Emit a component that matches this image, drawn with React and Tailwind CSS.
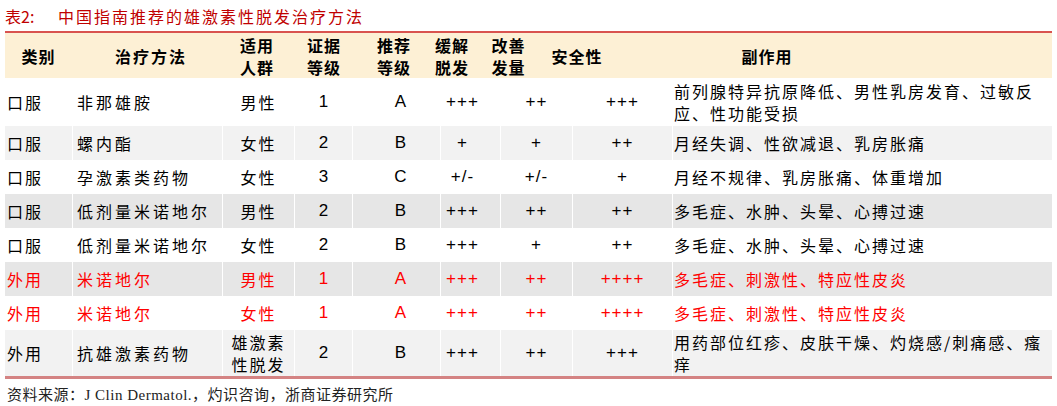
import React from 'react';

const cjk = '"Noto Sans CJK SC", "Liberation Sans", sans-serif';
const num = '"Liberation Sans", Arial, sans-serif';

const rows = [
  { type: '口服', name: '非那雄胺', who: '男性', ev: '1', rec: 'A', a: '+++', b: '++', s: '+++', side: ['前列腺特异抗原降低、男性乳房发育、过敏反', '应、性功能受损'], bg: 'bg-white', h: 'h-[48px]' },
  { type: '口服', name: '螺内酯', who: '女性', ev: '2', rec: 'B', a: '+', b: '+', s: '++', side: ['月经失调、性欲减退、乳房胀痛'], bg: 'bg-[#f2f2f2]', h: 'h-[34px]' },
  { type: '口服', name: '孕激素类药物', who: '女性', ev: '3', rec: 'C', a: '+/-', b: '+/-', s: '+', side: ['月经不规律、乳房胀痛、体重增加'], bg: 'bg-white', h: 'h-[34px]' },
  { type: '口服', name: '低剂量米诺地尔', who: '男性', ev: '2', rec: 'B', a: '+++', b: '++', s: '++', side: ['多毛症、水肿、头晕、心搏过速'], bg: 'bg-[#e6e6e6]', h: 'h-[34px]' },
  { type: '口服', name: '低剂量米诺地尔', who: '女性', ev: '2', rec: 'B', a: '+++', b: '+', s: '++', side: ['多毛症、水肿、头晕、心搏过速'], bg: 'bg-white', h: 'h-[34px]' },
  { type: '外用', name: '米诺地尔', who: '男性', ev: '1', rec: 'A', a: '+++', b: '++', s: '++++', side: ['多毛症、刺激性、特应性皮炎'], bg: 'bg-[#e6e6e6]', h: 'h-[34px]', red: true },
  { type: '外用', name: '米诺地尔', who: '女性', ev: '1', rec: 'A', a: '+++', b: '++', s: '++++', side: ['多毛症、刺激性、特应性皮炎'], bg: 'bg-white', h: 'h-[34px]', red: true },
  { type: '外用', name: '抗雄激素药物', who: ['雄激素', '性脱发'], ev: '2', rec: 'B', a: '+++', b: '++', s: '+++', side: ['用药部位红疹、皮肤干燥、灼烧感/刺痛感、瘙', '痒'], bg: 'bg-[#f2f2f2]', h: 'h-[46px]' },
];

const Lines = ({ v }) =>
  Array.isArray(v) ? v.map((l, i) => <div key={i}>{l}</div>) : v;

const App = () => {
  return (
    <div className="w-[1057px] h-[406px] bg-white relative overflow-hidden">
      {/* Title */}
      <div className="h-[31px] flex items-center pl-[5px] text-[16px] text-[#c00000]" style={{ fontFamily: cjk }}>
        <span className="w-[53px]">表2:</span>
        <span className="tracking-[2px]">中国指南推荐的雄激素性脱发治疗方法</span>
      </div>

      <div className="mx-[5px] w-[1047px]">
        {/* Header */}
        <div
          className="border-t-2 border-[#d9534f] bg-[#fdf0d5] h-[47px] grid grid-cols-[67px_158px_54px_80px_60px_56px_57px_80px_300px_135px] items-center text-center text-[16px] font-bold leading-[22px] text-black"
          style={{ fontFamily: cjk }}
        >
          <div className="tracking-[1px]">类别</div>
          <div className="tracking-[2px]">治疗方法</div>
          <div className="tracking-[1px]">适用<br />人群</div>
          <div className="tracking-[1px]">证据<br />等级</div>
          <div className="tracking-[1px]">推荐<br />等级</div>
          <div className="tracking-[1px]">缓解<br />脱发</div>
          <div className="tracking-[1px]">改善<br />发量</div>
          <div className="tracking-[1px]">安全性</div>
          <div className="tracking-[1px]">副作用</div>
          <div></div>
        </div>

        {/* Body */}
        {rows.map((r, i) => (
          <div
            key={i}
            className={`${r.bg} ${r.h} grid grid-cols-[67px_150px_72px_58px_88px_60px_72px_100px_380px] items-center text-[16px] leading-[22px] ${r.red ? 'text-[#ff0000]' : 'text-black'}`}
          >
            <div className="pl-[2px] tracking-[2px]" style={{ fontFamily: cjk }}>{r.type}</div>
            <div className="pl-[4px] tracking-[3px] border-l border-white h-full flex items-center" style={{ fontFamily: cjk }}>{r.name}</div>
            <div className="text-center tracking-[2px] border-l border-white h-full flex flex-col justify-center" style={{ fontFamily: cjk }}>
              <Lines v={r.who} />
            </div>
            <div className="text-[17px] text-center border-l border-white h-full flex items-center justify-center" style={{ fontFamily: num }}>{r.ev}</div>
            <div className="text-[17px] pl-[8px] text-center border-l border-white h-full flex items-center justify-center" style={{ fontFamily: num }}>{r.rec}</div>
            <div className="text-[17px] pr-[16px] text-center border-l border-white h-full flex items-center justify-center tracking-[1px]" style={{ fontFamily: num }}>{r.a}</div>
            <div className="text-[17px] text-center border-l border-white h-full flex items-center justify-center tracking-[1px]" style={{ fontFamily: num }}>{r.b}</div>
            <div className="text-[17px] text-center border-l border-white h-full flex items-center justify-center tracking-[1px]" style={{ fontFamily: num }}>{r.s}</div>
            <div className="pl-[1px] tracking-[2px] border-l border-white h-full flex flex-col justify-center" style={{ fontFamily: cjk }}>
              <Lines v={r.side} />
            </div>
          </div>
        ))}
        <div className="h-[3px] bg-[#d48383]"></div>
      </div>

      {/* Source */}
      <div className="pl-[7px] pt-[5px] text-[15px] text-[#222] tracking-[0.5px]" style={{ fontFamily: '"Liberation Serif", "Noto Sans CJK SC", serif' }}>
        资料来源：J Clin Dermatol.，灼识咨询，浙商证券研究所
      </div>
    </div>
  );
};

export default App;
